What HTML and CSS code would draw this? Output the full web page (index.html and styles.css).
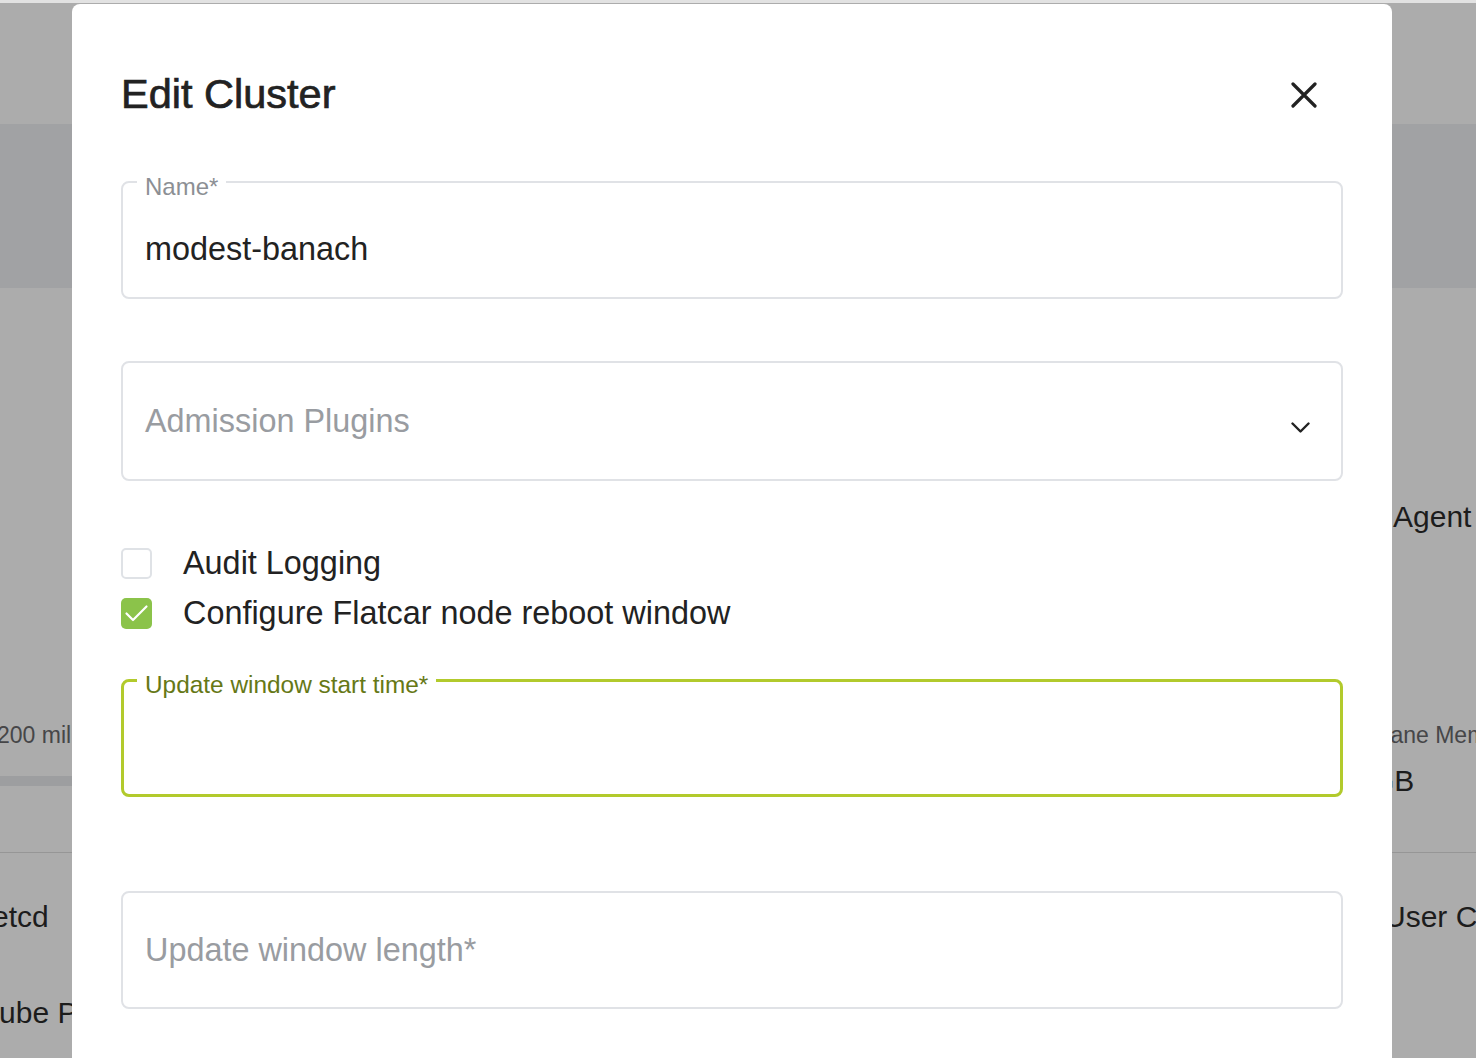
FILE: index.html
```html
<!DOCTYPE html>
<html lang="en">
<head>
<meta charset="utf-8">
<title>Edit Cluster</title>
<link rel="stylesheet" href="styles.css">
</head>
<body>
  <div class="page">
    <div class="topline"></div>
    <div class="header-bar"></div>
    <div class="band"></div>
    <div class="content">
      <div class="col col-left">
        <div class="small-text t-200">200 millicores</div>
        <div class="progress"></div>
        <div class="rule"></div>
        <div class="big-text t-etcd">etcd</div>
        <div class="big-text t-kube">Kube Proxy</div>
      </div>
      <div class="col col-right">
        <div class="big-text t-agent">Agent</div>
        <div class="small-text t-mem">Plane Memory</div>
        <div class="big-text t-gb">GB</div>
        <div class="rule"></div>
        <div class="big-text t-user">User Cluster</div>
      </div>
    </div>
  </div>

  <div class="modal">
    <div class="modal-header">
      <h1 class="modal-title">Edit Cluster</h1>
      <button class="close-btn" aria-label="Close">
        <svg width="26" height="26" viewBox="0 0 26 26"><path d="M2 2 L24 24 M24 2 L2 24" stroke="#222" stroke-width="3.2" stroke-linecap="round" fill="none"/></svg>
      </button>
    </div>

    <div class="field field-name">
      <span class="field-label">Name*</span>
      <span class="field-value">modest-banach</span>
    </div>

    <div class="field field-select">
      <span class="placeholder">Admission Plugins</span>
      <svg class="chevron" width="19" height="11" viewBox="0 0 19 11"><path d="M1.5 1.5 L9.5 9.5 L17.5 1.5" stroke="#222" stroke-width="2.4" fill="none" stroke-linecap="round" stroke-linejoin="round"/></svg>
    </div>

    <div class="checks">
      <div class="check-row">
        <span class="checkbox"></span>
        <span class="check-label">Audit Logging</span>
      </div>
      <div class="check-row">
        <span class="checkbox checked">
          <svg width="31" height="31" viewBox="0 0 31 31"><path d="M5.5 15.5 L12 22 L25.5 8.5" stroke="#fff" stroke-width="2.2" fill="none" stroke-linecap="round" stroke-linejoin="round"/></svg>
        </span>
        <span class="check-label">Configure Flatcar node reboot window</span>
      </div>
    </div>

    <div class="field field-focused field-start">
      <span class="field-label">Update window start time*</span>
    </div>

    <div class="field field-length">
      <span class="placeholder">Update window length*</span>
    </div>
  </div>
</body>
</html>
```

FILE: styles.css
```css
html, body {
  margin: 0;
  padding: 0;
}
body {
  width: 1476px;
  height: 1058px;
  overflow: hidden;
  position: relative;
  background: #acacac;
  font-family: "Liberation Sans", Arial, sans-serif;
  color: #222;
}

/* background page (dimmed) */
.page {
  display: flex;
  flex-direction: column;
}
.topline {
  height: 3px;
  background: #e2e2e2;
}
.header-bar {
  height: 121px;
  background: #acacac;
}
.band {
  height: 164px;
  background: #a1a2a4;
}
.content {
  display: flex;
  justify-content: space-between;
}
.col {
  display: flex;
  flex-direction: column;
  overflow: hidden;
  white-space: nowrap;
}
.col-left {
  width: 72px;
}
.col-right {
  width: 84px;
}
.small-text {
  font-size: 23px;
  line-height: 26px;
  color: #464648;
}
.big-text {
  font-size: 30px;
  line-height: 36px;
  color: #1c1c1c;
}
.progress {
  height: 10px;
  margin-top: 28px;
  background: #9d9ea0;
}
.rule {
  height: 1px;
  background: #969696;
}
.col-left .rule {
  margin-top: 66px;
}
.t-200 {
  margin-top: 434px;
  margin-left: -3px;
}
.t-etcd {
  margin-top: 46px;
  margin-left: -8px;
}
.t-kube {
  margin-top: 60px;
  margin-left: -21px;
}
.t-agent {
  margin-top: 211px;
  margin-left: 1px;
}
.t-mem {
  margin-top: 187px;
  margin-left: -22px;
}
.t-gb {
  margin-top: 15px;
  margin-left: -21px;
}
.col-right .rule {
  margin-top: 53px;
}
.t-user {
  margin-top: 46px;
  margin-left: -8px;
}

/* modal */
.modal {
  position: absolute;
  left: 72px;
  top: 4px;
  width: 1320px;
  bottom: -40px;
  box-sizing: border-box;
  background: #fff;
  border-radius: 8px 8px 0 0;
  padding: 66px 49px 0 49px;
  display: flex;
  flex-direction: column;
}
.modal-header {
  height: 48px;
  display: flex;
  align-items: center;
  justify-content: space-between;
  padding-right: 26px;
}
.modal-title {
  margin: 0;
  font-size: 41.5px;
  line-height: 48px;
  font-weight: 400;
  color: #222;
  -webkit-text-stroke: 0.7px #222;
}
.close-btn {
  width: 26px;
  height: 26px;
  padding: 0;
  border: 0;
  background: none;
  display: block;
  margin-top: 2px;
}
.close-btn svg {
  display: block;
}

.field {
  position: relative;
  box-sizing: border-box;
  height: 118px;
  border: 2px solid #e0e2e6;
  border-radius: 8px;
  display: flex;
  align-items: center;
  padding: 0 22px;
  font-size: 32.4px;
}
.field-label {
  position: absolute;
  left: 14px;
  top: -8px;
  padding: 0 8px;
  background: #fff;
  font-size: 24px;
  line-height: 24px;
  color: #8c8f94;
  white-space: nowrap;
}
.field-value {
  color: #222;
}
.placeholder {
  color: #999ca1;
}
.field-name {
  margin-top: 63px;
  padding-top: 19px;
}
.field-select {
  margin-top: 62px;
  height: 120px;
  justify-content: space-between;
  padding-right: 31px;
}
.chevron {
  display: block;
  margin-top: 12px;
}
.field-focused {
  border: 3px solid #b2ca2c;
  padding: 0 21px;
}
.field-focused .field-label {
  left: 13px;
  top: -9px;
  font-size: 24.4px;
  color: #667816;
}
.field-start {
  margin-top: 41px;
}
.field-length {
  margin-top: 94px;
}

.checks {
  margin-top: 57px;
  display: flex;
  flex-direction: column;
}
.check-row {
  height: 50px;
  display: flex;
  align-items: center;
}
.checkbox {
  box-sizing: border-box;
  width: 31px;
  height: 31px;
  border: 2.5px solid #dfe2e6;
  border-radius: 5px;
  margin-right: 31px;
  display: block;
  flex: none;
}
.checkbox.checked {
  border: 0;
  background: #8bc34a;
}
.checkbox svg {
  display: block;
}
.check-label {
  font-size: 32.4px;
  color: #222;
}
```
